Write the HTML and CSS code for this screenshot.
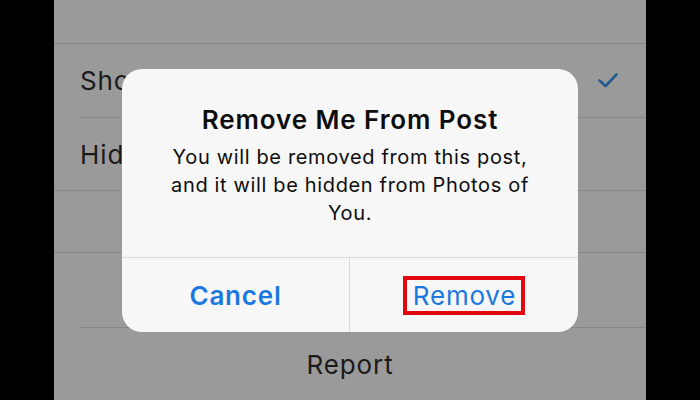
FILE: index.html
```html
<!DOCTYPE html>
<html lang="en">
<head>
<meta charset="utf-8">
<title>Remove Me From Post</title>
<link rel="stylesheet" href="styles.css">
</head>
<body>
  <div class="screen">
    <div class="list">
      <div class="row row-top"></div>
      <div class="row row-inset">
        <span class="label">Show on My Profile</span>
        <svg class="check" width="20" height="15" viewBox="0 0 20 15" aria-hidden="true">
          <path d="M1.5 7.5 L7.5 13 L18.5 1.5" fill="none" stroke="currentColor" stroke-width="2.6" stroke-linecap="round" stroke-linejoin="round"/>
        </svg>
      </div>
      <div class="row row-full">
        <span class="label">Hide from My Profile</span>
      </div>
      <div class="gap"></div>
      <div class="row row-inset row-tall"></div>
      <div class="row row-center">
        <span class="label">Report</span>
      </div>
    </div>

    <div class="alert" role="alertdialog">
      <div class="alert-body">
        <h1 class="alert-title">Remove Me From Post</h1>
        <p class="alert-message">You will be removed from this post, and it will be hidden from Photos of You.</p>
      </div>
      <div class="alert-actions">
        <button class="action action-cancel">Cancel</button>
        <button class="action action-remove"><span class="highlight">Remove</span></button>
      </div>
    </div>
  </div>
</body>
</html>
```

FILE: styles.css
```css
* {
  box-sizing: border-box;
}

html, body {
  margin: 0;
  height: 100%;
}

body {
  background: #000;
  display: flex;
  justify-content: center;
  font-family: Inter, "Noto Sans", "Liberation Sans", sans-serif;
  overflow: hidden;
}

.screen {
  position: relative;
  width: 592px;
  height: 400px;
  background: #9a9a9a;
}

.list {
  display: flex;
  flex-direction: column;
}

.row {
  display: flex;
  align-items: center;
  border-bottom: 1px solid #878787;
  color: #1b1b1b;
  font-size: 26px;
  letter-spacing: 0.9px;
}

.row-top {
  height: 44px;
}

.row-inset {
  height: 74px;
  margin-left: 26px;
  padding-right: 28px;
  justify-content: space-between;
}

.row-full {
  height: 73px;
  padding-left: 26px;
}

.gap {
  height: 62px;
  border-bottom: 1px solid #878787;
}

.row-tall {
  height: 75px;
}

.row-center {
  height: 72px;
  border-bottom: none;
  justify-content: center;
}

.check {
  color: #255b8e;
  display: block;
}

/* alert over the dimmed list */
.alert {
  position: absolute;
  top: 69px;
  left: 68px;
  width: 456px;
  height: 263px;
  background: #f7f7f7;
  border-radius: 20px;
  display: flex;
  flex-direction: column;
  overflow: hidden;
}

.alert-body {
  flex: 1;
  padding: 35px 20px 0;
  text-align: center;
  color: #0d0d0d;
}

.alert-title {
  margin: 0;
  font-size: 26px;
  line-height: 32px;
  font-weight: 600;
  letter-spacing: 0.9px;
}

.alert-message {
  margin: 7px auto 0;
  font-size: 20px;
  line-height: 28px;
  font-weight: 400;
  letter-spacing: 0.65px;
  max-width: 372px;
}

.alert-actions {
  height: 75px;
  display: grid;
  grid-template-columns: 1fr 1fr;
  border-top: 1px solid #dadada;
}

.action {
  border: none;
  background: transparent;
  font-family: inherit;
  font-size: 26px;
  letter-spacing: 0.8px;
  color: #1a78e0;
  display: flex;
  align-items: center;
  justify-content: center;
  padding: 0;
}

.action-cancel {
  font-weight: 600;
  border-right: 1px solid #dadada;
}

.action-remove {
  font-weight: 400;
}

.highlight {
  border: 4px solid #e2080f;
  padding: 0 5px 0 6px;
  line-height: 31px;
}
```
